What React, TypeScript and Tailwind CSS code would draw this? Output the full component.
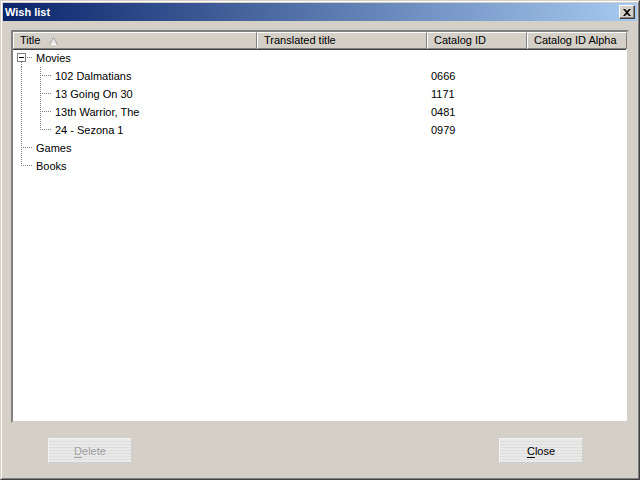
import React from "react";

const FONT = { fontFamily: '"Liberation Sans", Arial, sans-serif' };

interface Item {
  title: string;
  catalogId: string;
}

const movies: Item[] = [
  { title: "102 Dalmatians", catalogId: "0666" },
  { title: "13 Going On 30", catalogId: "1171" },
  { title: "13th Warrior, The", catalogId: "0481" },
  { title: "24 - Sezona 1", catalogId: "0979" },
];

const COLS = "grid grid-cols-[244px_170px_100px_100px]";

function HeaderCell({ children }: { children: React.ReactNode }) {
  return (
    <div className="flex h-[17px] items-center gap-[9px] border-t border-l border-t-white border-l-white border-r border-b border-r-[#808080] border-b-[#808080] px-[6px] text-[11px] text-black">
      {children}
    </div>
  );
}

function SortArrow() {
  return (
    <svg width="9" height="8" viewBox="0 0 9 8" className="mt-[1px]">
      <path d="M4.5 0.5 L8.5 7.5 L0.5 7.5 Z" fill="#e8e8e8" stroke="#a0a0a0" strokeWidth="1" />
      <path d="M1.5 7.5 L7.5 7.5" stroke="#ffffff" strokeWidth="1" />
    </svg>
  );
}

// tree gutter lines, 18px tall rows
function Dots({ x1, y1, x2, y2 }: { x1: number; y1: number; x2: number; y2: number }) {
  return (
    <line x1={x1} y1={y1} x2={x2} y2={y2} stroke="#808080" strokeWidth="1" strokeDasharray="1 1" shapeRendering="crispEdges" />
  );
}

function RootGutter({ expander, last }: { expander?: boolean; last?: boolean }) {
  return (
    <svg width="23" height="18" className="shrink-0">
      {expander ? (
        <>
          <rect x="4.5" y="4.5" width="8" height="8" fill="#ffffff" stroke="#808080" shapeRendering="crispEdges" />
          <line x1="6" y1="8.5" x2="11" y2="8.5" stroke="#000" shapeRendering="crispEdges" />
          <Dots x1={14} y1={8.5} x2={20} y2={8.5} />
          <Dots x1={8.5} y1={13} x2={8.5} y2={18} />
        </>
      ) : (
        <>
          <Dots x1={8.5} y1={0} x2={8.5} y2={last ? 9 : 18} />
          <Dots x1={10} y1={8.5} x2={20} y2={8.5} />
        </>
      )}
    </svg>
  );
}

function ChildGutter({ last }: { last?: boolean }) {
  return (
    <svg width="42" height="18" className="shrink-0">
      <Dots x1={8.5} y1={0} x2={8.5} y2={18} />
      <Dots x1={27.5} y1={0} x2={27.5} y2={last ? 9 : 18} />
      <Dots x1={29} y1={8.5} x2={39} y2={8.5} />
    </svg>
  );
}

function Row({ gutter, title, catalogId }: { gutter: React.ReactNode; title: string; catalogId?: string }) {
  return (
    <div className={`${COLS} h-[18px] text-[11px] text-black`}>
      <div className="flex items-center">
        {gutter}
        <span>{title}</span>
      </div>
      <div />
      <div className="flex items-center pl-[4px]">{catalogId}</div>
      <div />
    </div>
  );
}

function Button({ label, hot, disabled }: { label: string; hot: string; disabled?: boolean }) {
  return (
    <button
      disabled={disabled}
      className={`flex h-[25px] w-[84px] items-center justify-center border border-[#f2f2f2] border-r-[#cfcfcf] border-b-[#cfcfcf] bg-[repeating-linear-gradient(180deg,#e9e9e9_0px,#e9e9e9_2px,#dedede_2px,#dedede_3px)] pt-[1px] text-[11px] ${disabled ? "text-[#a0a0a0]" : "text-black"}`}
    >
      <span>
        <span className="underline underline-offset-2">{hot}</span>
        {label.slice(hot.length)}
      </span>
    </button>
  );
}

export default function App() {
  return (
    <div style={FONT} className="h-[480px] w-[640px] bg-[#d4d0c8]">
      <div className="flex h-full flex-col border border-t-[#d4d0c8] border-l-[#d4d0c8] border-r-[#404040] border-b-[#404040]">
        <div className="flex h-full flex-col border border-t-white border-l-white border-r-[#808080] border-b-[#808080] p-[1px]">
          {/* Title bar */}
          <div className="flex h-[18px] items-center justify-between bg-[linear-gradient(90deg,#0a246a,#a6caf0)] pl-[2px] pr-[2px]">
            <span className="text-[11px] font-bold text-white">Wish list</span>
            <div className="flex h-[14px] w-[16px] items-center justify-center border border-t-white border-l-white border-r-[#404040] border-b-[#404040] bg-[#d4d0c8] shadow-[inset_-1px_-1px_0_#808080]">
              <svg width="8" height="7" viewBox="0 0 8 7">
                <path d="M0 0 L2 0 L4 2 L6 0 L8 0 L5 3.5 L8 7 L6 7 L4 5 L2 7 L0 7 L3 3.5 Z" fill="#000" />
              </svg>
            </div>
          </div>

          {/* Body */}
          <div className="flex flex-1 flex-col px-[8px] pt-[9px]">
            {/* List view */}
            <div className="h-[393px] border-2 border-t-[#808080] border-l-[#808080] border-r-[#d4d0c8] border-b-[#d4d0c8] shadow-[inset_1px_1px_0_#404040]">
              <div className="h-full border-r border-b border-r-white border-b-white bg-white">
                <div className={`${COLS} bg-[#d4d0c8] shadow-[0_1px_0_#404040]`}>
                  <HeaderCell>
                    <span>Title</span>
                    <SortArrow />
                  </HeaderCell>
                  <HeaderCell>Translated title</HeaderCell>
                  <HeaderCell>Catalog ID</HeaderCell>
                  <HeaderCell>Catalog ID Alpha</HeaderCell>
                </div>
                <div>
                  <Row gutter={<RootGutter expander />} title="Movies" />
                  {movies.map((m, i) => (
                    <Row
                      key={m.title}
                      gutter={<ChildGutter last={i === movies.length - 1} />}
                      title={m.title}
                      catalogId={m.catalogId}
                    />
                  ))}
                  <Row gutter={<RootGutter />} title="Games" />
                  <Row gutter={<RootGutter last />} title="Books" />
                </div>
              </div>
            </div>

            {/* Buttons */}
            <div className="mt-[15px] flex justify-between pl-[37px] pr-[46px]">
              <Button label="Delete" hot="D" disabled />
              <Button label="Close" hot="C" />
            </div>
          </div>
        </div>
      </div>
    </div>
  );
}
